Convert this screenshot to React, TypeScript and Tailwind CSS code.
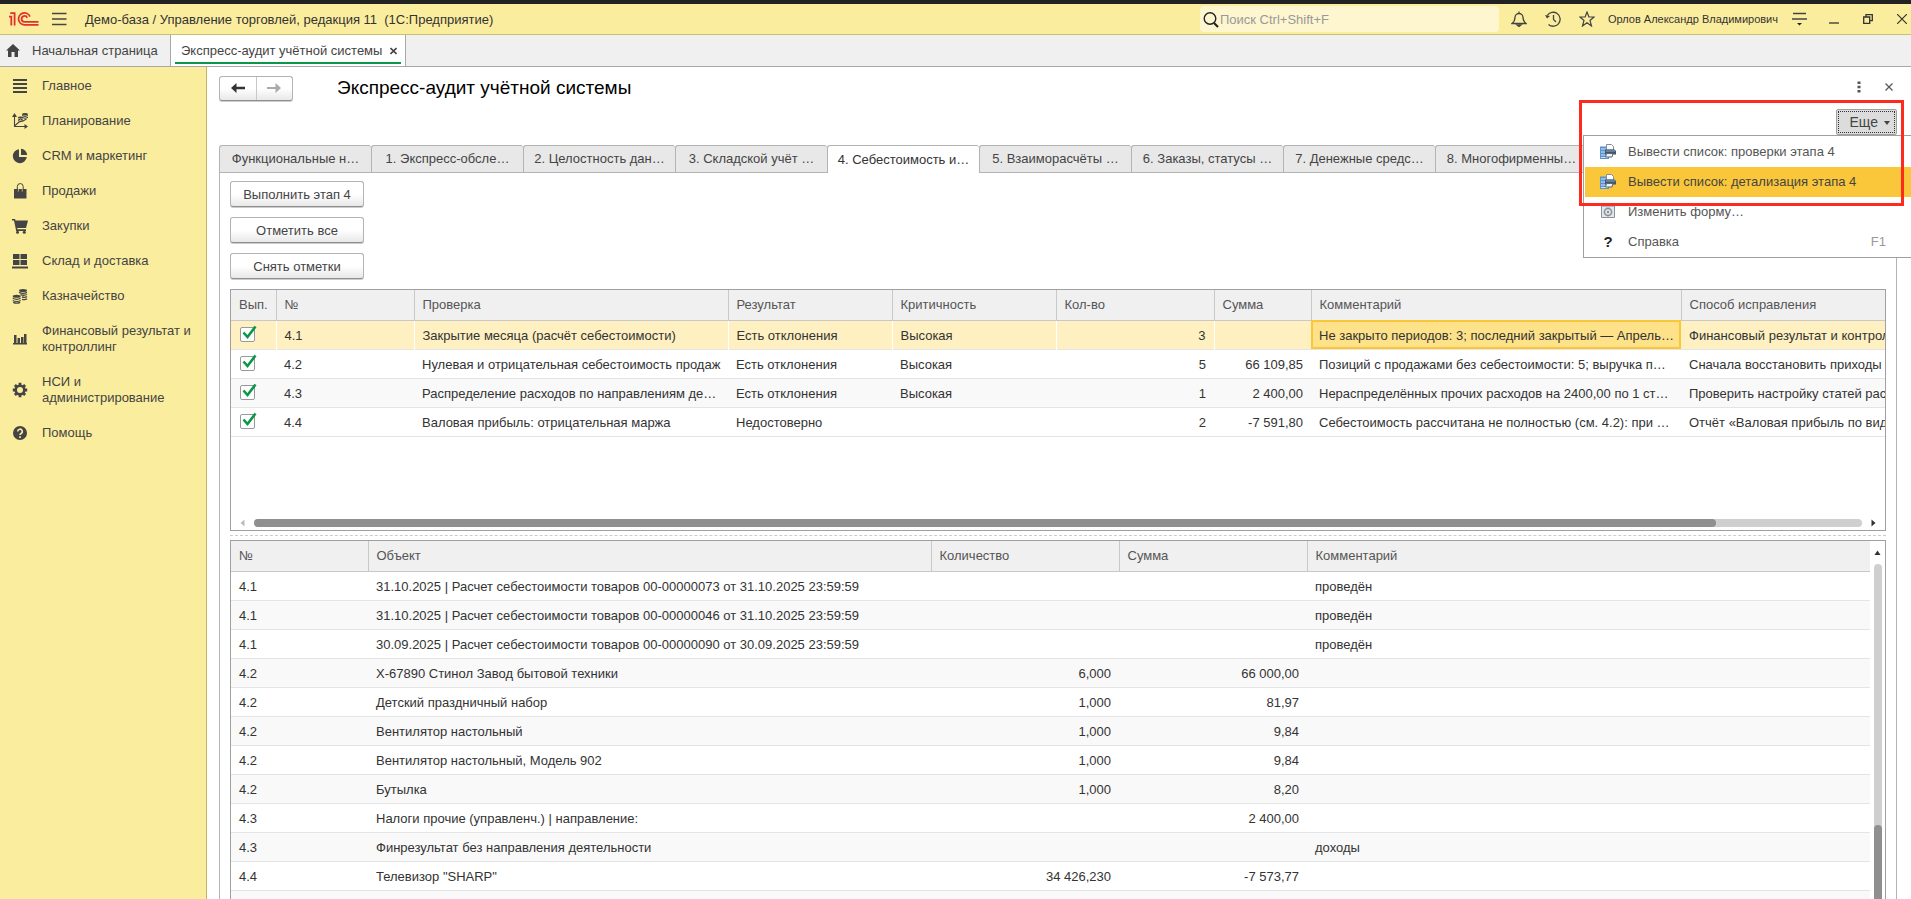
import React from "react";

interface CheckRow {
  code: string;
  name: string;
  result: string;
  level: string;
  count: string;
  sum: string;
  comment: string;
  fix: string;
}

interface DetailRow {
  code: string;
  object: string;
  qty: string;
  sum: string;
  comment: string;
}

const stageTabs = [
  "Функциональные н…",
  "1. Экспресс-обсле…",
  "2. Целостность дан…",
  "3. Складской учёт …",
  "4. Себестоимость и…",
  "5. Взаиморасчёты …",
  "6. Заказы, статусы …",
  "7. Денежные средс…",
  "8. Многофирменны…",
];

const checks: CheckRow[] = [
  {
    code: "4.1",
    name: "Закрытие месяца (расчёт себестоимости)",
    result: "Есть отклонения",
    level: "Высокая",
    count: "3",
    sum: "",
    comment: "Не закрыто периодов: 3; последний закрытый — Апрель…",
    fix: "Финансовый результат и контрол",
  },
  {
    code: "4.2",
    name: "Нулевая и отрицательная себестоимость продаж",
    result: "Есть отклонения",
    level: "Высокая",
    count: "5",
    sum: "66 109,85",
    comment: "Позиций с продажами без себестоимости: 5; выручка п…",
    fix: "Сначала восстановить приходы",
  },
  {
    code: "4.3",
    name: "Распределение расходов по направлениям де…",
    result: "Есть отклонения",
    level: "Высокая",
    count: "1",
    sum: "2 400,00",
    comment: "Нераспределённых прочих расходов на 2400,00 по 1 ст…",
    fix: "Проверить настройку статей расх",
  },
  {
    code: "4.4",
    name: "Валовая прибыль: отрицательная маржа",
    result: "Недостоверно",
    level: "",
    count: "2",
    sum: "-7 591,80",
    comment: "Себестоимость рассчитана не полностью (см. 4.2): при …",
    fix: "Отчёт «Валовая прибыль по вид",
  },
];

const details: DetailRow[] = [
  { code: "4.1", object: "31.10.2025 | Расчет себестоимости товаров 00-00000073 от 31.10.2025 23:59:59", qty: "", sum: "", comment: "проведён" },
  { code: "4.1", object: "31.10.2025 | Расчет себестоимости товаров 00-00000046 от 31.10.2025 23:59:59", qty: "", sum: "", comment: "проведён" },
  { code: "4.1", object: "30.09.2025 | Расчет себестоимости товаров 00-00000090 от 30.09.2025 23:59:59", qty: "", sum: "", comment: "проведён" },
  { code: "4.2", object: "Х-67890 Стинол Завод бытовой техники", qty: "6,000", sum: "66 000,00", comment: "" },
  { code: "4.2", object: "Детский праздничный набор", qty: "1,000", sum: "81,97", comment: "" },
  { code: "4.2", object: "Вентилятор настольный", qty: "1,000", sum: "9,84", comment: "" },
  { code: "4.2", object: "Вентилятор настольный, Модель 902", qty: "1,000", sum: "9,84", comment: "" },
  { code: "4.2", object: "Бутылка", qty: "1,000", sum: "8,20", comment: "" },
  { code: "4.3", object: "Налоги прочие (управленч.) | направление:", qty: "", sum: "2 400,00", comment: "" },
  { code: "4.3", object: "Финрезультат без направления деятельности", qty: "", sum: "", comment: "доходы" },
  { code: "4.4", object: "Телевизор \"SHARP\"", qty: "34 426,230", sum: "-7 573,77", comment: "" },
  { code: "", object: "", qty: "", sum: "", comment: "" },
];

const Svg = (props: { children: React.ReactNode }) => (
  <svg width="16" height="16" viewBox="0 0 16 16" className="shrink-0" fill="currentColor" aria-hidden="true">
    {props.children}
  </svg>
);

const sections = [
  {
    label: "Главное",
    icon: <path d="M1 1h14v2H1zM1 5h14v2H1zM1 9h14v2H1zM1 13h14v2H1z" />,
  },
  {
    label: "Планирование",
    icon: (
      <>
        <path d="M2.5 14V2M2 13.5h12M3 12.5l4-3.5 4-1 3.5-2" fill="none" stroke="currentColor" strokeWidth="1.1" />
        <path d="M0 4l2.5-4L5 4zM12.5 11l3.5 2.5-3.5 2.5z" />
        <ellipse cx="13" cy="1.3" rx="3" ry="1.2" />
        <path d="M10 2.6q3 1.8 6 0M10 4.4q3 1.8 6 0" fill="none" stroke="currentColor" />
        <ellipse cx="8.5" cy="4.6" rx="2.6" ry="1.1" />
        <path d="M6 6q2.5 1.6 5 0M6 7.6q2.5 1.5 5 0" fill="none" stroke="currentColor" />
      </>
    ),
  },
  {
    label: "CRM и маркетинг",
    icon: (
      <>
        <path d="M7 1.2V9h7.8A7 7 0 1 1 7 1.2z" />
        <path d="M9 .8A6.6 6.6 0 0 1 15.2 7H9z" />
      </>
    ),
  },
  {
    label: "Продажи",
    icon: (
      <>
        <path d="M2 6h12.5v9.5H2z" />
        <path d="M6.2 6v2.5M10.3 6v2.5" stroke="#fbed9e" strokeWidth="0.8" />
        <path d="M5.3 8V3.5a2.9 2.9 0 0 1 5.9 0V8" fill="none" stroke="currentColor" />
      </>
    ),
  },
  {
    label: "Закупки",
    icon: (
      <>
        <path d="M0 1h3l.6 1.5H16L14 10H5.2l.3 1.3H14V13H4.200L2 2.6H0z" />
        <circle cx="5.5" cy="14.2" r="1.5" />
        <circle cx="12.3" cy="14.2" r="1.5" />
      </>
    ),
  },
  {
    label: "Склад и доставка",
    icon: <path d="M1 1h6.5v5H1zM8.5 1H15v5H8.500zM1 7h6.500v5H1zM8.500 7H15v5H8.500zM0 13.500h16v2H0z" />,
  },
  {
    label: "Казначейство",
    icon: (
      <>
        <ellipse cx="11" cy="2.5" rx="4" ry="1.5" />
        <path d="M7 4.3q4 2 8 0M8.5 6.7q3.5 1.2 6.5-.2M10 9q3 .7 5-.3M10 11.3q3 .6 5-.4" fill="none" stroke="currentColor" strokeWidth="1.3" />
        <ellipse cx="4.7" cy="8.3" rx="4" ry="1.5" />
        <path d="M.7 10.3q4 2 8 0M.7 12.5q4 2 8 0M1.2 14.4q3.5 1.6 7 0" fill="none" stroke="currentColor" strokeWidth="1.2" />
      </>
    ),
  },
  {
    label: "Финансовый результат и контроллинг",
    icon: <path d="M2 4h2.500v8H2zM5.500 7H8v5H5.500zM9 6h2.500v6H9zM12 3h2.500v9H12zM1 12h14v1.500H1z" />,
  },
  {
    label: "НСИ и администрирование",
    icon: (
      <>
        <circle cx="8" cy="8" r="4.3" fill="none" stroke="currentColor" strokeWidth="2.6" />
        <path
          d="M8 .8v2.700M8 12.500v2.700M.8 8h2.700M12.500 8h2.700M2.900 2.900l2 2M11.100 11.100l2 2M2.900 13.100l2-2M11.100 4.900l2-2"
          stroke="currentColor"
          strokeWidth="2.8"
        />
      </>
    ),
  },
  {
    label: "Помощь",
    icon: (
      <>
        <circle cx="8" cy="8" r="7" />
        <path d="M5.7 6.5a2.3 2.3 0 1 1 3.4 2C8.2 9 8 9.3 8 10.1" fill="none" stroke="#fbed9e" strokeWidth="1.6" />
        <path d="M7.2 11.2h1.7v1.7H7.200z" fill="#fbed9e" />
      </>
    ),
  },
];

const Logo = () => (
  <svg width="30" height="14" viewBox="0 0 30 14" fill="none" stroke="#e0322d" strokeWidth="1.8" aria-label="1С">
    <path d="M0 4.6h2.3V13.6M1.2 1.2h4.4v12.4" />
    <path d="M20.9 4.6A5.9 5.9 0 1 0 15.5 12.8H29.5" />
    <path d="M18.2 5.8A2.9 2.9 0 1 0 15.5 9.8H29.5" />
  </svg>
);

const PrintListIcon = () => (
  <svg width="16" height="16" viewBox="0 0 16 16" className="shrink-0" aria-hidden="true">
    <path d="M0 2.5h9V15H0z" fill="#5b93cf" />
    <path d="M1 5h6M1 8h4M1 11h6M1 13.5h7" stroke="#cfe3f6" />
    <path d="M6.5.5h5l2 2V6h-7z" fill="#fff" stroke="#7f8e9d" />
    <path d="M5 5.5h9.5L16 7v3.5H5z" fill="#3e566e" />
    <path d="M6 7h9" stroke="#8fa6bc" />
    <path d="M6.5 9.5H13L12 13H5.500z" fill="#eef3f8" stroke="#56697d" />
  </svg>
);

const FormIcon = () => (
  <svg width="16" height="16" viewBox="0 0 16 16" className="shrink-0" aria-hidden="true">
    <path d="M1.5 1.5h13v12h-13z" fill="#e4e8eb" stroke="#8a9299" />
    <path d="M1 1h14v1.5H1z" fill="#6f9ac6" />
    <circle cx="8" cy="8" r="3.6" fill="none" stroke="#8a9299" strokeWidth="1.6" />
    <circle cx="8" cy="8" r="1.2" fill="#8a9299" />
  </svg>
);

const TitleBar = () => (
  <header className="flex h-[35px] shrink-0 items-center border-t-4 border-b border-t-[#222] border-b-[#cdbf6c] bg-[#fbed9e] pr-1 pl-[9px] text-[#333]">
    <Logo />
    <button className="ml-[13px]" aria-label="Меню">
      <svg width="15" height="14" viewBox="0 0 15 14" stroke="#444" strokeWidth="1.3">
        <path d="M0 1.5h14.5M0 7h14.5M0 12.5h14.5" />
      </svg>
    </button>
    <span className="ml-[18px] pt-px text-[13px] whitespace-pre">Демо-база / Управление торговлей, редакция 11  (1С:Предприятие)</span>
    <label className="ml-auto flex h-[26px] w-[299px] items-center rounded-sm bg-[#fdf6cf] pl-[3px]">
      <svg width="16" height="17" viewBox="0 0 16 17" className="shrink-0" fill="none" stroke="#222" aria-hidden="true">
        <circle cx="7" cy="7.5" r="5.8" strokeWidth="1.4" />
        <path d="M11 12l4 4" strokeWidth="2.2" />
      </svg>
      <input className="ml-px w-full bg-transparent pt-px text-[13px] outline-none placeholder:text-[#999]" placeholder="Поиск Ctrl+Shift+F" aria-label="Поиск" />
    </label>
    <div className="ml-3 flex items-center gap-[18px]">
      <button aria-label="Уведомления">
        <svg width="16" height="18" viewBox="0 0 16 18" fill="none" stroke="#444" strokeWidth="1.3">
          <path d="M8 1.5V3M1 13.5c2.5-2 3-3.5 3-6a4 4 0 0 1 8 0c0 2.5.5 4 3 6z" />
          <path d="M6 15h4l-2 1.5z" fill="#444" />
        </svg>
      </button>
      <button aria-label="История">
        <svg width="16" height="16" viewBox="0 0 16 16" fill="none" stroke="#444" strokeWidth="1.3">
          <path d="M2.2 4.5A7 7 0 1 1 3.5 13.5M8.5 4v4.5l2.5 2.5" />
          <path d="M0 4l2 3.5 3-2.5z" fill="#444" stroke="none" />
        </svg>
      </button>
      <button aria-label="Избранное">
        <svg width="16" height="16" viewBox="0 0 16 16" fill="none" stroke="#444" strokeWidth="1.2">
          <path d="M8 1l1.9 5H15l-4 3.5 1.5 5.5L8 11.8 3.5 15 5 9.5 1 6h5.100z" />
        </svg>
      </button>
    </div>
    <span className="ml-[13px] text-[11px]">Орлов Александр Владимирович</span>
    <button className="ml-[14px]" aria-label="Настройки">
      <svg width="15" height="14" viewBox="0 0 15 14" stroke="#444" strokeWidth="1.3">
        <path d="M1 1.5h13M0 7h15" />
        <path d="M5 11h5l-2.5 2.5z" fill="#222" stroke="none" />
      </svg>
    </button>
    <div className="ml-[22px] flex items-center gap-6 text-[#333]">
      <button aria-label="Свернуть">
        <svg width="10" height="10" viewBox="0 0 10 10" stroke="currentColor" strokeWidth="1.3">
          <path d="M0 9h10" />
        </svg>
      </button>
      <button aria-label="Восстановить">
        <svg width="10" height="10" viewBox="0 0 10 10" fill="none" stroke="currentColor" strokeWidth="1.3">
          <path d="M.7 3h6v6.300h-6zM3 3V.7h6.300v6H6.700" />
        </svg>
      </button>
      <button aria-label="Закрыть">
        <svg width="10" height="10" viewBox="0 0 10 10" stroke="currentColor" strokeWidth="1.2">
          <path d="M0 0l10 10M10 0L0 10" />
        </svg>
      </button>
    </div>
  </header>
);

const WindowTabs = () => (
  <nav className="flex h-8 shrink-0 border-b border-[#a8a8a8] bg-[#f0f0f0] text-[13px] text-[#444]">
    <a href="#" className="flex w-[170px] items-center gap-3 pl-[6px]">
      <svg width="14" height="13" viewBox="0 0 14 13" fill="#444" aria-hidden="true">
        <path d="M7 0l7 6.5h-2V13H8.500V8h-3v5H2V6.500H0z" />
      </svg>
      Начальная страница
    </a>
    <div className="flex w-[236px] flex-col border-x border-[#a8a8a8] bg-white px-1">
      <div className="flex flex-1 items-center justify-between pt-1 pr-1 pl-[6px]">
        <a href="#">Экспресс-аудит учётной системы</a>
        <button aria-label="Закрыть вкладку">
          <svg width="7" height="8" viewBox="0 0 7 8" stroke="#444" strokeWidth="1.6">
            <path d="M.5 1l6 6M6.5 1l-6 6" />
          </svg>
        </button>
      </div>
      <div className="mb-[2px] h-[2px] bg-[#0a9748]" />
    </div>
  </nav>
);

const Sidebar = () => (
  <aside className="w-[207px] shrink-0 border-r border-[#c5b665] bg-[#fbed9e] pt-[11px]">
    <ul className="flex flex-col gap-[19px] pl-3">
      {sections.map((section) => (
        <li key={section.label}>
          <a href="#" className="flex items-center gap-[14px] pr-3 text-[13px] leading-4 text-[#444]">
            <Svg>{section.icon}</Svg>
            {section.label}
          </a>
        </li>
      ))}
    </ul>
  </aside>
);

const FormButton = (props: { children: React.ReactNode }) => (
  <button className="h-[26px] w-[134px] rounded-[3px] border border-[#b3b3b3] border-b-[#8f8f8f] bg-linear-to-b from-white from-50% to-[#e8e8e8] pt-px text-[13px] text-[#444] shadow-[0_1px_0_#ccc]">
    {props.children}
  </button>
);

const headCell = "border-r border-[#c8c8c8] px-2 text-left font-normal";
const lastHeadCell = "px-2 text-left font-normal";
const cell = "truncate pt-[2px] pl-2";
const numCell = "truncate pt-[2px] pr-2 text-right";

const ChecksTable = () => (
  <div className="flex h-[242px] shrink-0 flex-col overflow-hidden border border-[#a0a0a0]">
    <table className="w-full table-fixed border-collapse text-[13px] text-[#333]">
      <colgroup>
        <col className="w-[45px]" />
        <col className="w-[138px]" />
        <col className="w-[314px]" />
        <col className="w-[164px]" />
        <col className="w-[164px]" />
        <col className="w-[158px]" />
        <col className="w-[97px]" />
        <col className="w-[370px]" />
        <col />
      </colgroup>
      <thead>
        <tr className="h-[30px] border-b border-[#c8c8c8] bg-[#f0f0f0] text-[#555]">
          {["Вып.", "№", "Проверка", "Результат", "Критичность", "Кол-во", "Сумма", "Комментарий"].map((name) => (
            <th key={name} className={headCell}>{name}</th>
          ))}
          <th className={lastHeadCell}>Способ исправления</th>
        </tr>
      </thead>
      <tbody>
        {checks.map((row, i) => (
          <tr
            key={row.code}
            className={i === 0 ? "h-[29px] border-b border-[#e4e4e4] bg-[#fef0c1]" : "h-[29px] border-b border-[#e4e4e4] even:bg-white odd:bg-[#f9f9f9]"}
          >
            <td className="px-[9px]">
              <span className="relative block size-[15px]">
                <input
                  type="checkbox"
                  defaultChecked
                  aria-label={row.name}
                  className="block size-[15px] appearance-none rounded-[2px] border border-[#999] bg-white"
                />
                <svg width="16" height="16" viewBox="0 0 16 16" className="pointer-events-none absolute top-0 left-0 overflow-visible" fill="none" stroke="#0a9748" strokeWidth="2.6" aria-hidden="true">
                  <path d="M3.5 5.500l4 4.500L15.500-.5" />
                </svg>
              </span>
            </td>
            <td className={i === 0 ? `${cell} border-x border-white` : cell}>{row.code}</td>
            <td className={cell}>{row.name}</td>
            <td className={i === 0 ? `${cell} border-x border-white` : cell}>{row.result}</td>
            <td className={cell}>{row.level}</td>
            <td className={i === 0 ? `${numCell} border-x border-white` : numCell}>{row.count}</td>
            <td className={numCell}>{row.sum}</td>
            <td className={i === 0 ? `${cell} bg-[#fee28a] outline-2 -outline-offset-2 outline-[#fbc73a]` : cell}>{row.comment}</td>
            <td className="overflow-hidden pt-[2px] pl-2 whitespace-nowrap">{row.fix}</td>
          </tr>
        ))}
      </tbody>
    </table>
    <div className="mt-auto mb-[3px] flex items-center gap-[9px] px-[9px]">
      <svg width="5" height="8" viewBox="0 0 5 8" fill="#bbb" aria-hidden="true">
        <path d="M4.5.500v7L.500 4z" />
      </svg>
      <div className="h-2 flex-1 rounded-full bg-[#cfcfcf]">
        <div className="h-2 w-10/11 rounded-full bg-[#8f8f8f]" />
      </div>
      <svg width="5" height="8" viewBox="0 0 5 8" fill="#333" aria-hidden="true">
        <path d="M.5.500v7l4-3.500z" />
      </svg>
    </div>
  </div>
);

const DetailsTable = () => (
  <div className="flex min-h-0 flex-1 border border-b-0 border-[#a0a0a0]">
    <div className="min-w-0 flex-1 overflow-hidden">
      <table className="w-full table-fixed border-collapse text-[13px] text-[#333]">
        <colgroup>
          <col className="w-[137px]" />
          <col className="w-[563px]" />
          <col className="w-[188px]" />
          <col className="w-[188px]" />
          <col />
        </colgroup>
        <thead>
          <tr className="h-[30px] border-b border-[#c8c8c8] bg-[#f0f0f0] text-[#555]">
            <th className={headCell}>№</th>
            <th className={headCell}>Объект</th>
            <th className={headCell}>Количество</th>
            <th className={headCell}>Сумма</th>
            <th className={lastHeadCell}>Комментарий</th>
          </tr>
        </thead>
        <tbody>
          {details.map((row, i) => (
            <tr key={i} className="h-[29px] border-b border-[#e4e4e4] even:bg-[#f9f9f9]">
              <td className={cell}>{row.code}</td>
              <td className={cell}>{row.object}</td>
              <td className={numCell}>{row.qty}</td>
              <td className={numCell}>{row.sum}</td>
              <td className={cell}>{row.comment}</td>
            </tr>
          ))}
        </tbody>
      </table>
    </div>
    <div className="flex w-[15px] shrink-0 flex-col items-center gap-[9px] pt-[9px]">
      <svg width="7" height="5" viewBox="0 0 7 5" className="shrink-0" fill="#333" aria-hidden="true">
        <path d="M.5 5h6L3.500.500z" />
      </svg>
      <div className="flex w-2 flex-1 flex-col justify-end rounded-t-full bg-[#cfcfcf]">
        <div className="h-[22%] rounded-t-full bg-[#8f8f8f]" />
      </div>
    </div>
  </div>
);

const menuItem = "flex h-[30px] w-full items-center gap-3 pl-[15px] text-left";

const MoreMenu = () => (
  <div className="absolute top-[35px] left-1 z-10 w-[330px] border border-[#a0a0a0] bg-white px-px pt-px text-[13px] text-[#555]">
    <button className={menuItem}>
      <PrintListIcon />
      Вывести список: проверки этапа 4
    </button>
    <button className={`${menuItem} bg-[#fbc73a] text-[#444]`}>
      <PrintListIcon />
      Вывести список: детализация этапа 4
    </button>
    <button className={menuItem}>
      <FormIcon />
      Изменить форму…
    </button>
    <button className={menuItem}>
      <span className="w-4 text-center text-[15px] font-bold text-[#222]">?</span>
      Справка
      <span className="ml-auto pr-[25px] text-[#999]">F1</span>
    </button>
  </div>
);

const App = () => {
  return (
    <div className="flex h-screen flex-col overflow-hidden bg-white font-['Liberation_Sans',Arial,sans-serif]">
      <TitleBar />
      <WindowTabs />
      <div className="flex min-h-0 flex-1">
        <Sidebar />
        <main className="relative flex min-w-0 flex-1 flex-col pr-[14px] pl-3">
          <div className="flex h-[42px] shrink-0 items-center">
            <div className="flex h-[25px] w-[74px] rounded-[3px] border border-[#b3b3b3] border-b-[#8f8f8f] bg-linear-to-b from-white from-50% to-[#e8e8e8] shadow-[0_1px_0_#ccc]">
              <button className="flex flex-1 items-center justify-center border-r border-[#c8c8c8]" aria-label="Назад">
                <svg width="14" height="10" viewBox="0 0 14 10" fill="#333">
                  <path d="M0 5l5.500-5v3.800H14v2.400H5.500V10z" />
                </svg>
              </button>
              <button className="flex flex-1 items-center justify-center" aria-label="Вперед">
                <svg width="14" height="10" viewBox="0 0 14 10" fill="#aaa">
                  <path d="M14 5L8.500 0v4H0v2h8.500v4z" />
                </svg>
              </button>
            </div>
            <h1 className="ml-11 text-[19px] text-black">Экспресс-аудит учётной системы</h1>
            <div className="mr-1 ml-auto flex items-center gap-6 pb-[3px]">
              <button aria-label="Действия">
                <svg width="4" height="12" viewBox="0 0 4 12" fill="#555">
                  <path d="M.5.500h3v2.500h-3zM.500 4.700h3v2.500h-3zM.500 9h3v2.500h-3z" />
                </svg>
              </button>
              <button aria-label="Закрыть форму">
                <svg width="8" height="8" viewBox="0 0 8 8" stroke="#555" strokeWidth="1.2">
                  <path d="M.5.500l7 7M7.500.500l-7 7" />
                </svg>
              </button>
            </div>
          </div>
          <div className="flex h-9 shrink-0 justify-end">
            <button className="flex h-[26px] w-[61px] items-center justify-center rounded-[2px] border border-[#a0a0a0] bg-[#dcdcdc] p-px text-[14px] text-[#444]">
              <span className="flex size-full items-center justify-end gap-[6px] border border-dotted border-[#333] pt-px pr-1">
                Еще
                <svg width="6" height="4" viewBox="0 0 6 4" fill="#444" aria-hidden="true">
                  <path d="M0 0h6L3 4z" />
                </svg>
              </span>
            </button>
          </div>
          <div className="flex h-7 shrink-0">
            {stageTabs.map((tab, i) => (
              <button
                key={tab}
                className={
                  i === 4
                    ? "w-[152px] rounded-t-[3px] border-t border-l border-[#b3b3b3] bg-white text-[13px] text-[#333]"
                    : "w-[152px] rounded-t-[3px] border-t border-b border-l border-[#b3b3b3] bg-[#e8e8e8] text-[13px] text-[#444]"
                }
              >
                {tab}
              </button>
            ))}
            <div className="flex-1 border-b border-l border-[#b3b3b3]" />
          </div>
          <section className="flex min-h-0 flex-1 flex-col border-x border-[#b3b3b3] px-[10px] pt-2">
            <div className="mb-[10px] flex flex-col gap-[10px]">
              <FormButton>Выполнить этап 4</FormButton>
              <FormButton>Отметить все</FormButton>
              <FormButton>Снять отметки</FormButton>
            </div>
            <ChecksTable />
            <div className="h-[9px] shrink-0 pt-1">
              <div className="border-t border-dashed border-[#ccc]" />
            </div>
            <DetailsTable />
          </section>
          {/* menu over the form, with the frame drawn round its print commands */}
          <div className="pointer-events-none absolute top-[33px] right-[7px] z-10 h-[106px] w-[325px]">
            <div className="pointer-events-auto">
              <MoreMenu />
            </div>
            <div className="absolute inset-0 z-20 border-[3px] border-[#fd2a1e]" />
          </div>
        </main>
      </div>
    </div>
  );
};

export default App;
